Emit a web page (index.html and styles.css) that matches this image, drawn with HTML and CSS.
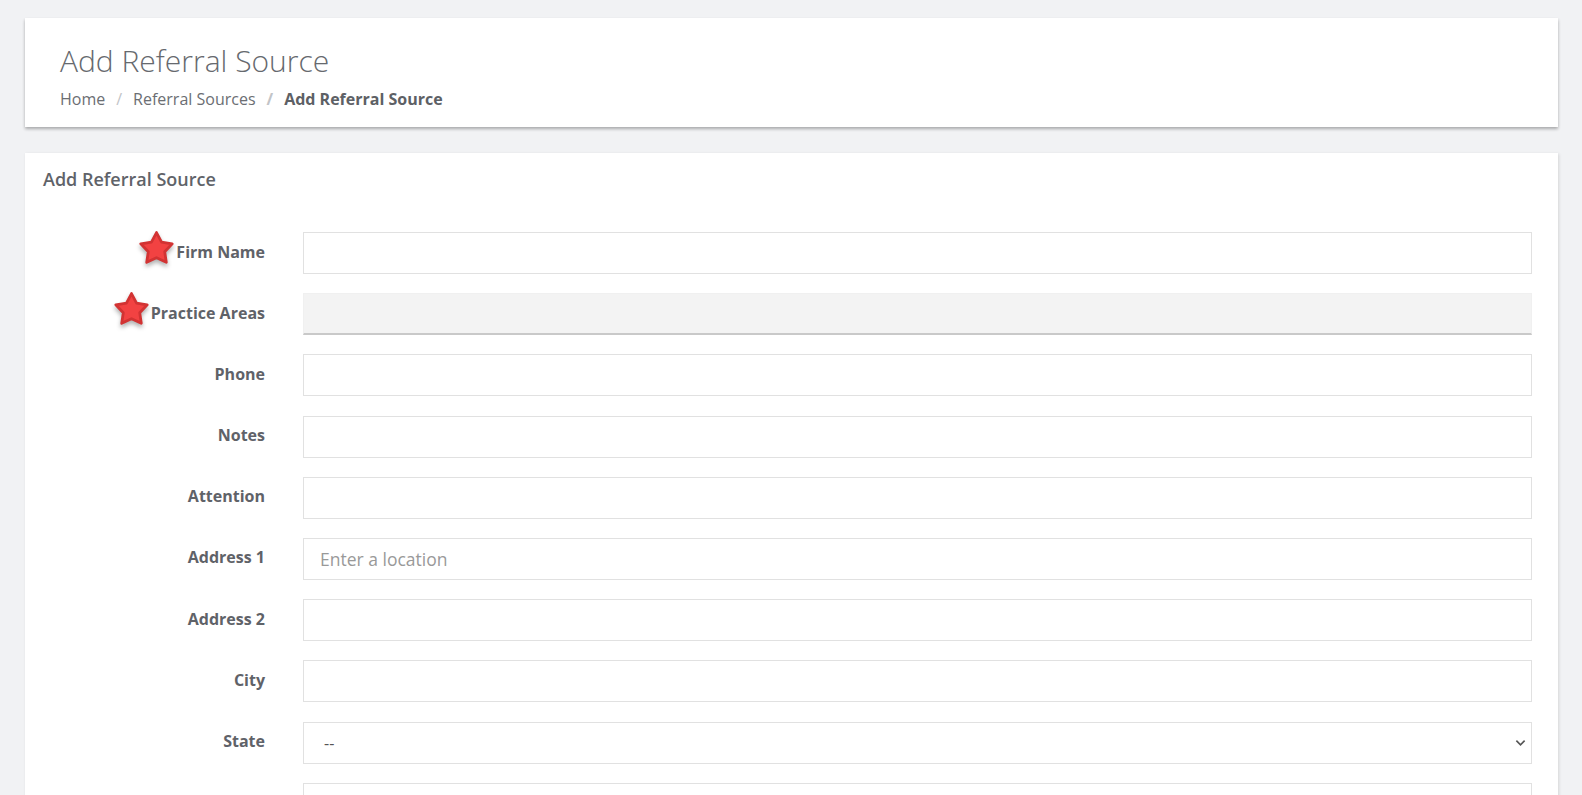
FILE: index.html
```html
<!DOCTYPE html>
<html lang="en">
<head>
  <meta charset="UTF-8" />
  <title>Add Referral Source</title>
  <link rel="stylesheet" href="styles.css">
</head>
<body>
  <div class="page-head">
    <h1>Add Referral Source</h1>
    <ol class="crumbs">
      <li><a href="#">Home</a></li>
      <li><a href="#">Referral Sources</a></li>
      <li class="current">Add Referral Source</li>
    </ol>
  </div>

  <div class="card">
    <h2>Add Referral Source</h2>
    <form class="form">
      <label class="label required">
        <svg class="star" viewBox="0 0 24 24"><path d="M12 2.3L15.29 8.47 22.2 9.6 17.33 14.73 18.35 21.6 12 18.6 5.65 21.6 6.67 14.73 1.8 9.6 8.71 8.47Z"/></svg>
        Firm Name
      </label>
      <input class="field" type="text">

      <label class="label required">
        <svg class="star" viewBox="0 0 24 24"><path d="M12 2.3L15.29 8.47 22.2 9.6 17.33 14.73 18.35 21.6 12 18.6 5.65 21.6 6.67 14.73 1.8 9.6 8.71 8.47Z"/></svg>
        Practice Areas
      </label>
      <div class="field tags"></div>

      <label class="label">Phone</label>
      <input class="field" type="text">

      <label class="label">Notes</label>
      <input class="field" type="text">

      <label class="label">Attention</label>
      <input class="field" type="text">

      <label class="label">Address 1</label>
      <input class="field" type="text" placeholder="Enter a location">

      <label class="label">Address 2</label>
      <input class="field" type="text">

      <label class="label">City</label>
      <input class="field" type="text">

      <label class="label">State</label>
      <div class="select-wrap">
        <select class="field select">
          <option>--</option>
        </select>
        <svg class="chevron" viewBox="0 0 12 8"><path d="M1.5 1.5l4.5 4.5 4.5-4.5"/></svg>
      </div>

      <span class="label"></span>
      <input class="field" type="text">
    </form>
  </div>
</body>
</html>
```

FILE: styles.css
```css
html, body {
  overflow: hidden;
}
body {
  margin: 0;
  padding: 18px 24px 0 25px;
  background: #f1f2f4;
  font-family: "Open Sans", Arial, sans-serif;
  color: #63666b;
}
.page-head {
  background: #fff;
  padding: 25px 35px 16px;
  box-shadow: 0 2px 3px rgba(0,0,0,0.3);
}
h1 {
  margin: 0 0 8px;
  font-size: 30px;
  font-weight: 300;
  line-height: 36px;
  color: #66696e;
}
.crumbs {
  list-style: none;
  margin: 0;
  padding: 0;
  display: flex;
  font-size: 16px;
  line-height: 24px;
}
.crumbs li + li::before {
  content: "/";
  color: #c2c4c7;
  padding: 0 11px;
}
.crumbs a {
  color: #6b6e73;
  text-decoration: none;
}
.crumbs .current {
  font-weight: 700;
  color: #5d6065;
}
.card {
  background: #fff;
  margin-top: 26px;
  padding: 14px 26px 40px 18px;
  box-shadow: 1px 1px 3px rgba(0,0,0,0.12);
}
h2 {
  margin: 0 0 41px;
  font-size: 18px;
  font-weight: 600;
  line-height: 24px;
  color: #606369;
}
.form {
  display: grid;
  grid-template-columns: 222px 1fr;
  column-gap: 38px;
  row-gap: 19.2px;
  align-items: center;
}
.label {
  display: flex;
  justify-content: flex-end;
  align-items: center;
  font-size: 16px;
  font-weight: 700;
  line-height: 24px;
  color: #5f6268;
  padding-bottom: 3px;
}
.star {
  width: 37px;
  height: 37px;
  margin: -8px 1px 0 0;
  filter: drop-shadow(0 3px 2px rgba(0,0,0,0.3));
}
.star path {
  fill: #f24242;
  stroke: #d23333;
  stroke-width: 1.8;
  stroke-linejoin: round;
}
.field {
  box-sizing: border-box;
  width: 100%;
  height: 42px;
  margin: 0;
  border: 1px solid #e1e1e1;
  background: #fff;
  padding: 0 16px;
  font-family: "Open Sans", Arial, sans-serif;
  font-size: 17.5px;
  color: #555;
  outline: none;
}
.field::placeholder {
  color: #999;
}
.tags {
  background: #f3f3f3;
  border-color: #f0f0f0;
  border-bottom: 2px solid #c9c9c9;
}
.select-wrap {
  position: relative;
}
.select {
  appearance: none;
  -webkit-appearance: none;
  padding-left: 20px;
  font-size: 16px;
  border-radius: 0;
}
.chevron {
  position: absolute;
  right: 6px;
  top: 17px;
  width: 11px;
  height: 8px;
  pointer-events: none;
}
.chevron path {
  fill: none;
  stroke: #555;
  stroke-width: 1.8;
}
```
